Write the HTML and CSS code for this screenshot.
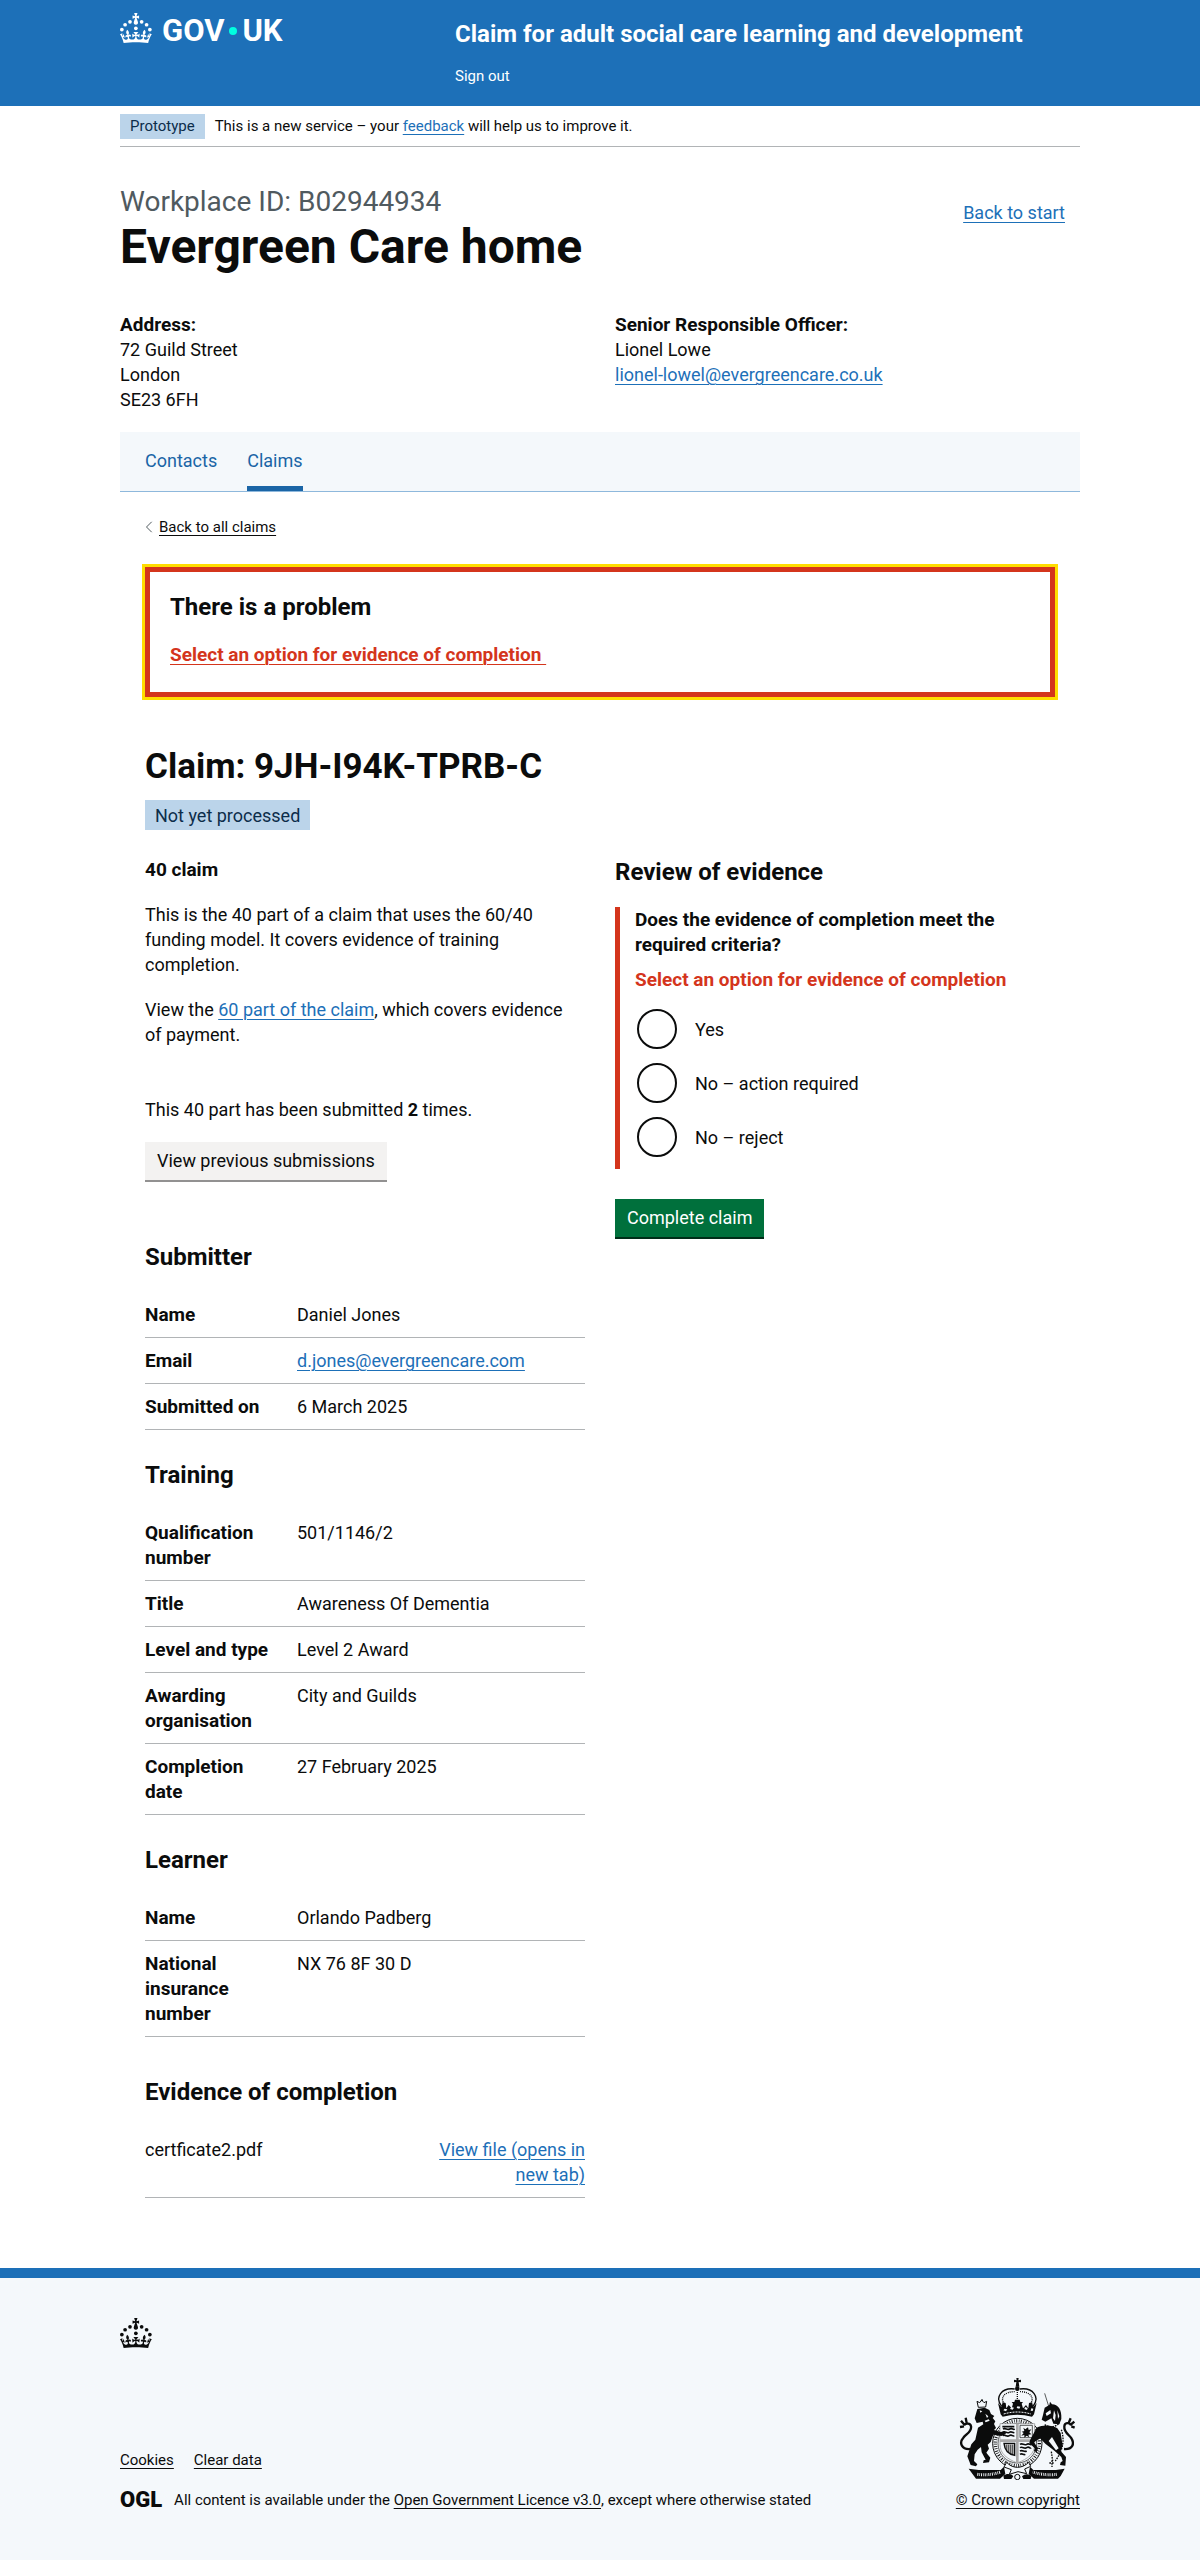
FILE: index.html
```html
<!DOCTYPE html>
<html lang="en">
<head>
  <meta charset="utf-8">
  <meta name="viewport" content="width=device-width, initial-scale=1">
  <title>Claim 9JH-I94K-TPRB-C – Claim for adult social care learning and development</title>
  <link rel="stylesheet" href="styles.css">
</head>
<body>
  <svg class="sprite" aria-hidden="true">
    <symbol id="crown" viewBox="0 0 64 60">
      <circle cx="20" cy="17.6" r="3.7"/><circle cx="10.2" cy="23.5" r="3.7"/><circle cx="3.7" cy="33.2" r="3.7"/>
      <circle cx="31.7" cy="30.6" r="3.7"/><circle cx="43.3" cy="17.6" r="3.7"/><circle cx="53.2" cy="23.5" r="3.7"/><circle cx="59.7" cy="33.2" r="3.7"/>
      <path d="M33.1,9.8c.2-.1.3-.3.5-.5l4.6,2.4v-6.8l-4.6,1.5c-.1-.2-.3-.3-.5-.5l1.9-5.9h-6.7l1.9,5.9c-.2.1-.3.3-.5.5l-4.6-1.5v6.8l4.6-2.4c.1.2.3.3.5.5l-2.6,8c-.9,2.8,1.2,5.7,4.1,5.7h0c3,0,5.1-2.9,4.1-5.7l-2.6-8ZM37,37.9s-3.4,3.8-4.1,6.1c2.2,0,4.2-.5,6.4-2.8l-.7,8.5c-2-2.8-4.4-4.1-5.7-3.8.1,3.1.5,6.7,5.8,7.2,3.7.3,6.7-1.5,7-3.8.4-2.6-2-4.3-3.7-1.6-1.4-4.5,2.4-6.1,4.9-3.2-1.9-4.5-1.8-7.7,2.4-10.9,3,4,2.6,7.3-1.2,11.1,2.4-1.3,6.2,0,4,4.6-1.2-2.8-3.7-2.2-4.2.2-.3,1.7.7,3.7,3,4.2,1.9.3,4.7-.9,7-5.9-1.3,0-2.4.7-3.9,1.7l2.4-8c.6,2.3,1.4,3.7,2.2,4.5.6-1.6.5-2.8,0-5.3l5,1.8c-2.6,3.6-5.2,8.7-7.3,17.5-7.4-1.1-15.7-1.7-24.5-1.7h0c-8.8,0-17.1.6-24.5,1.7-2.1-8.9-4.7-13.9-7.3-17.5l5-1.8c-.5,2.5-.6,3.7,0,5.3.8-.8,1.6-2.3,2.2-4.5l2.4,8c-1.5-1-2.6-1.7-3.9-1.7,2.3,5,5.2,6.2,7,5.9,2.3-.4,3.3-2.4,3-4.2-.5-2.4-3-3.1-4.2-.2-2.2-4.6,1.6-6,4-4.6-3.7-3.7-4.2-7.1-1.2-11.1,4.2,3.2,4.3,6.4,2.4,10.9,2.5-2.8,6.3-1.3,4.9,3.2-1.8-2.7-4.1-1-3.7,1.6.3,2.3,3.3,4.1,7,3.8,5.4-.5,5.7-4.2,5.8-7.2-1.3-.2-3.7,1-5.7,3.8l-.7-8.5c2.2,2.3,4.2,2.7,6.4,2.8-.7-2.3-4.1-6.1-4.1-6.1h10.6,0Z"/>
    </symbol>
  </svg>

  <header class="header">
    <div class="container header-grid">
      <a class="logo" href="#" aria-label="GOV.UK">
        <svg class="crown" aria-hidden="true"><use href="#crown"/></svg>
        <span class="logo-text"><span>GOV</span><span class="logo-dot"></span><span>UK</span></span>
      </a>
      <div class="service">
        <a class="service-name" href="#">Claim for adult social care learning and development</a>
        <a class="sign-out" href="#">Sign out</a>
      </div>
    </div>
  </header>

  <div class="container">
    <div class="phase-banner">
      <strong class="tag tag-small">Prototype</strong>
      <span>This is a new service – your <a class="link" href="#">feedback</a> will help us to improve it.</span>
    </div>

    <main>
      <div class="workplace-head">
        <div>
          <span class="caption">Workplace ID: B02944934</span>
          <h1 class="heading-xl">Evergreen Care home</h1>
        </div>
        <a class="link back-start" href="#">Back to start</a>
      </div>

      <div class="two-col">
        <address class="details"><strong>Address:</strong><br>72 Guild Street<br>London<br>SE23 6FH</address>
        <div class="details"><strong>Senior Responsible Officer:</strong><br>Lionel Lowe<br><a class="link" href="#">lionel-lowel@evergreencare.co.uk</a></div>
      </div>

      <nav class="tabs" aria-label="Workplace">
        <a class="tab" href="#">Contacts</a>
        <a class="tab tab-current" href="#" aria-current="page">Claims</a>
      </nav>

      <div class="panel">
        <a class="back-link" href="#">
          <svg class="chevron" viewBox="0 0 7 12" aria-hidden="true"><path d="M6.200 .8 1 6l5.200 5.200"/></svg>
          <span>Back to all claims</span>
        </a>

        <section class="error-summary" role="alert">
          <h2 class="heading-m">There is a problem</h2>
          <a class="error-link" href="#evidence-yes">Select an option for evidence of completion&nbsp;</a>
        </section>

        <h2 class="heading-l">Claim: 9JH-I94K-TPRB-C</h2>
        <strong class="tag">Not yet processed</strong>

        <div class="two-col claim">
          <div>
            <h3 class="heading-s">40 claim</h3>
            <p>This is the 40 part of a claim that uses the 60/40 funding model. It covers evidence of training completion.</p>
            <p>View the <a class="link" href="#">60 part of the claim</a>, which covers evidence of payment.</p>
            <p class="submitted">This 40 part has been submitted <strong>2</strong> times.</p>
            <button class="button button-secondary" type="button">View previous submissions</button>

            <section class="summary summary-first">
              <h3 class="heading-m">Submitter</h3>
              <dl>
                <div class="row"><dt>Name</dt><dd>Daniel Jones</dd></div>
                <div class="row"><dt>Email</dt><dd><a class="link" href="#">d.jones@evergreencare.com</a></dd></div>
                <div class="row"><dt>Submitted on</dt><dd>6 March 2025</dd></div>
              </dl>
            </section>

            <section class="summary">
              <h3 class="heading-m">Training</h3>
              <dl>
                <div class="row"><dt>Qualification number</dt><dd>501/1146/2</dd></div>
                <div class="row"><dt>Title</dt><dd>Awareness Of Dementia</dd></div>
                <div class="row"><dt>Level and type</dt><dd>Level 2 Award</dd></div>
                <div class="row"><dt>Awarding organisation</dt><dd>City and Guilds</dd></div>
                <div class="row"><dt>Completion date</dt><dd>27 February 2025</dd></div>
              </dl>
            </section>

            <section class="summary">
              <h3 class="heading-m">Learner</h3>
              <dl>
                <div class="row"><dt>Name</dt><dd>Orlando Padberg</dd></div>
                <div class="row"><dt>National insurance number</dt><dd>NX 76 8F 30 D</dd></div>
              </dl>
            </section>

            <section class="summary summary-files">
              <h3 class="heading-m">Evidence of completion</h3>
              <ul class="files">
                <li class="row file"><span>certficate2.pdf</span><a class="link" href="#">View file (opens in new tab)</a></li>
              </ul>
            </section>
          </div>

          <form class="review">
            <h3 class="heading-m">Review of evidence</h3>
            <fieldset class="question" aria-describedby="evidence-error">
              <legend>Does the evidence of completion meet the required criteria?</legend>
              <p class="error-message" id="evidence-error">Select an option for evidence of completion</p>
              <div class="radios">
                <div class="radio"><input type="radio" name="evidence" id="evidence-yes"><label for="evidence-yes">Yes</label></div>
                <div class="radio"><input type="radio" name="evidence" id="evidence-action"><label for="evidence-action">No – action required</label></div>
                <div class="radio"><input type="radio" name="evidence" id="evidence-reject"><label for="evidence-reject">No – reject</label></div>
              </div>
            </fieldset>
            <button class="button" type="button">Complete claim</button>
          </form>
        </div>
      </div>
    </main>
  </div>

  <footer class="footer">
    <div class="container">
      <svg class="crown" aria-hidden="true"><use href="#crown"/></svg>
      <div class="footer-meta">
        <div>
          <nav class="footer-links" aria-label="Support">
            <a class="footer-link" href="#">Cookies</a>
            <a class="footer-link" href="#">Clear data</a>
          </nav>
          <div class="licence">
            <span class="ogl">OGL</span>
            <span>All content is available under the <a class="footer-link" href="#">Open Government Licence v3.0</a>, except where otherwise stated</span>
          </div>
        </div>
        <div class="copyright">
          <svg class="arms" viewBox="7 15 351 306" aria-hidden="true">
            <!-- crest: crown and orb -->
            <path d="M179 15h7l-1 7 8-2v8l-7-1 2 14h-11l2-14-7 1v-8l8 2z"/>
            <path class="line-dark" d="M135 100c-22-28 0-57 39-52M229 100c22-28 0-57-39-52"/>
            <path class="line-dots" d="M146 98c-20-24-2-42 28-42M218 98c20-24 2-42-28-42"/>
            <path class="line-dots" d="M182 45v40"/>
            <circle cx="182" cy="47" r="7"/>
            <path d="M124 90l10 12 4-14 9 2 2 16 7-10 9 10 4-14-4-5h8l2-7h14l2 7h8l-4 5 4 14 9-10 7 10 2-16 9-2 4 14 10-12-8 34-6 7c-30-8-58-8-88 0l-6-7z"/>
            <path class="light" d="M140 112l8 3 4-6-8-2zM160 108l8 2 4-6-8-2zM180 105l8 2 3-6-9-1zM203 108l8 3 2-6-8-3zM222 113l6 1 2-7-6-1z"/>
            <path class="line-light" d="M141 123c28-8 54-8 82 0"/>
            <!-- garter and shield -->
            <ellipse class="ring" cx="182" cy="211" rx="74" ry="75"/>
            <ellipse class="motto" cx="182" cy="211" rx="66" ry="67"/>
            <ellipse class="line-thin" cx="182" cy="211" rx="58" ry="59"/>
            <path class="shield" d="M130 152h104v62c0 28-20 43-52 56-32-13-52-28-52-56z"/>
            <path class="cross" d="M182 152v118M130 203h104"/>
            <path class="squiggle" d="M137 161h36M139 168c8-5 12 5 20 0s10 4 15 0M138 178c8-5 12 5 20 0s10 4 15 0M138 188c8-5 12 5 20 0s10 4 15 0"/>
            <path class="line-thin" d="M190 157h37v37h-37z"/>
            <path d="M200 164l6 5 8-6 2 8 8-2-6 9 6 6-9 1 3 8-8-5-7 6v-8l-9 2 7-8-6-4 8-2z"/>
            <path class="squiggle" d="M190 214c8-5 12 5 20 0s10 4 15 0M190 224c8-5 12 5 20 0s10 4 13 0M190 234c8-5 12 5 20 0M190 244c8-5 10 4 16 0"/>
            <path class="harp" d="M142 211h32v36c-16-3-30-14-32-36z"/>
            <path class="line-thin" d="M150 215v18M156 215v23M162 215v27M168 215v29"/>
            <!-- lion -->
            <path class="outline" d="M61 85l8 4 6-8 7 8 8-4-3 17-22 1z"/>
            <circle cx="76" cy="82" r="3"/>
            <path d="M62 108l22-4 14 7 5 12 10 6-5 6 8 10-4 8 6 12-6 6 20 6 12-2 4 8-14 6-24-4-8 22-9 8 4 12-8 12 12 15-4 14-18 2 2-8 6-2-12-22-2-16-10 8-9 14-2 20 10 10-4 6-16-4-10-26 12-36 12-14 8-36 16-10-2-8-18 4-6-14z"/>
            <path class="light" d="M69 112l8 3-6 4zM86 122l9 8-4 5zM84 143l12-4 3 4-12 5z"/>
            <path class="tail" d="M40 228c-24 2-34-18-20-34 10-12 26-18 23-34-2-10-15-10-21-3M24 156l-11-13M30 150l-3-16M22 160l-12 2"/>
            <!-- unicorn -->
            <path class="line-thin" d="M277 103l-13-42"/>
            <path d="M264 104l14-8 2-10 6 8c18 0 30 16 28 44l-6 16-18-2-6-16-18 10-11-6 4-14z"/>
            <path class="light" d="M267 121l14-10 2 10-13 8zM292 112l5 14-2 18-6-8zM302 111l6 19-4 8z"/>
            <path class="chain" d="M264 155c14 10 34 8 45-6M314 170c10 30 6 60-18 94"/>
            <path d="M240 164c16-8 44-10 62 2l10 14 6 38-6 16 16 18-2 26-16-2 2-8 6-4-4-12-20-18-28-22-16-16-18 12 12 18-4 12-8-4 2-8-16-16 2-8z"/>
            <path class="light" d="M286 192l20 34-8 6-22-28z"/>
            <path class="chain" d="M284 236l4 28M278 270h16M286 262v20"/>
            <path class="tail" d="M322 228c24 2 34-14 21-34-8-10-22-18-20-34 1-12 14-12 20-4M341 156l12-10M336 150l6-14M344 160l10 4"/>
            <!-- motto ribbon -->
            <path d="M36 287l30 4h66l10-10 4 22-16 14H58l-6-8z"/>
            <path d="M324 287l-26 4h-68l-10-10-4 22 16 14h72l8-8z"/>
            <path class="ribbon-text" d="M62 304c24 3 46 1 70-7M300 304c-22 3-48 1-72-7"/>
            <path class="outline" d="M150 268c18 20 46 20 66 0l6 12-18 8 6 14-26-6-26 8 6-14-22-8z"/>
            <path d="M140 308c10-8 24-6 30 2l-6 8h-22zM196 310c8-8 22-8 28 0l-2 8h-22z"/>
            <circle class="outline" cx="182" cy="312" r="8"/>
          </svg>
          <a class="footer-link" href="#">© Crown copyright</a>
        </div>
      </div>
    </div>
  </footer>
</body>
</html>
```
FILE: styles.css
```css
:root {
  --ink: #0b0c0c;
  --blue: #1d70b8;
  --tint: #f4f8fb;
  --rule: #b1b4b6;
  --red: #d4351c;
}

* { box-sizing: border-box; }

body {
  margin: 0;
  background: #fff;
  color: var(--ink);
  font: 18px/25px Roboto, "Liberation Sans", sans-serif;
}

h1, h2, h3, p, dl, dd, ul, fieldset { margin: 0; padding: 0; }
ul { list-style: none; }
strong { font-weight: 700; }
a { color: inherit; text-decoration: none; }

.sprite { display: none; }

.container {
  max-width: 960px;
  margin: 0 auto;
}

.link, .error-link, .back-link span, .footer-link {
  text-decoration: underline;
  text-decoration-thickness: 1px;
  text-underline-offset: 3px;
}
.link { color: var(--blue); }

.crown {
  display: block;
  width: 32px;
  height: 30px;
  fill: currentColor;
}

/* Header */
.header {
  background: var(--blue);
  color: #fff;
  padding: 13px 0 20px;
}
.header-grid {
  display: grid;
  grid-template-columns: 320px 1fr;
  gap: 15px;
}
.logo {
  display: flex;
  align-items: flex-start;
  gap: 10px;
}
.logo-text {
  display: flex;
  align-items: center;
  gap: 5px;
  font-size: 31px;
  font-weight: 700;
  line-height: 36px;
}
.logo-dot {
  width: 8px;
  height: 8px;
  border-radius: 50%;
  background: #00ffe0;
}
.service {
  display: flex;
  flex-direction: column;
  align-items: flex-start;
  gap: 17px;
  padding-top: 6px;
}
.service-name {
  font-size: 24px;
  font-weight: 700;
  line-height: 30px;
}
.sign-out {
  font-size: 15px;
  line-height: 20px;
}

/* Phase banner */
.phase-banner {
  display: flex;
  align-items: center;
  gap: 10px;
  padding: 8px 0 7px;
  border-bottom: 1px solid var(--rule);
  font-size: 15px;
}
.tag {
  display: inline-block;
  padding: 3px 10px 2px;
  background: #bbd4ea;
  color: #0c2d4a;
  font-weight: 400;
  vertical-align: top;
}
.tag-small { padding: 0 10px; }

/* Workplace details */
.workplace-head {
  display: flex;
  justify-content: space-between;
  padding: 40px 0;
}
.caption {
  display: block;
  margin-bottom: 5px;
  color: #505a5f;
  font-size: 28px;
  line-height: 30px;
}
.heading-xl {
  font-size: 48px;
  line-height: 50px;
}
.heading-l {
  margin-bottom: 13px;
  font-size: 35px;
  line-height: 40px;
}
.heading-m {
  margin-bottom: 20px;
  font-size: 24px;
  line-height: 30px;
}
.heading-s {
  margin-bottom: 20px;
  font-size: 19px;
  line-height: 25px;
}
.back-start {
  align-self: flex-start;
  margin: 13px 15px 0 0;
}
.two-col {
  display: grid;
  grid-template-columns: 1fr 1fr;
  gap: 30px;
}
.details { font-style: normal; }
.details strong { font-size: 19px; }

/* Tabs */
.tabs {
  display: flex;
  gap: 30px;
  margin-top: 20px;
  padding: 0 25px;
  border-bottom: 1px solid #8eb8dc;
  background: var(--tint);
  color: #1a65a6;
}
.tab { padding: 16px 0 18px; }
.tab-current {
  padding-bottom: 13px;
  border-bottom: 5px solid #1a65a6;
}

.panel { padding: 25px 25px 70px; }

.back-link {
  display: flex;
  align-items: center;
  gap: 6px;
  width: fit-content;
  font-size: 15px;
  line-height: 20px;
}
.chevron {
  width: 8px;
  height: 12px;
  fill: none;
  stroke: #505a5f;
}

.error-summary {
  margin: 30px 0 50px;
  padding: 20px 20px 25px;
  border: 5px solid var(--red);
  outline: 3px solid #ffdd00;
}
.error-link {
  display: inline-block;
  color: var(--red);
  font-size: 19px;
  font-weight: 700;
  vertical-align: top;
}

/* Claim */
.claim { padding-top: 27px; }
.claim p {
  margin-bottom: 20px;
  padding-right: 10px;
}
.claim p.submitted { margin-top: 50px; }

.button {
  display: block;
  padding: 6px 12px 7px;
  border: 0;
  border-radius: 0;
  background: #00703c;
  box-shadow: 0 2px 0 #002d18;
  color: #fff;
  font: inherit;
  cursor: pointer;
}
.button-secondary {
  background: #f3f2f1;
  box-shadow: 0 2px 0 #929191;
  color: var(--ink);
}

.summary { margin-top: 30px; }
.summary-first { margin-top: 62px; }
.summary-files { margin-top: 40px; }
.row {
  display: grid;
  grid-template-columns: 132px 1fr;
  gap: 20px;
  padding: 10px 0;
  border-bottom: 1px solid var(--rule);
}
.row dt {
  font-size: 19px;
  font-weight: 700;
}
.file { grid-template-columns: 1fr 160px; }
.file a { text-align: right; }

/* Review form */
.question {
  display: flow-root;
  min-width: 0;
  margin-bottom: 30px;
  padding: 0 0 10px 15px;
  border: 0;
  border-left: 5px solid var(--red);
}
/* Floated so that the side border runs the full height of the group */
.question legend {
  float: left;
  width: 100%;
  margin-bottom: 10px;
  padding: 0;
  font-size: 19px;
  font-weight: 700;
}
.claim p.error-message {
  clear: both;
  margin-bottom: 15px;
  color: var(--red);
  font-size: 19px;
  font-weight: 700;
}
.radios {
  display: grid;
  gap: 10px;
}
.radio {
  display: flex;
  align-items: center;
  gap: 18px;
  min-height: 44px;
}
.radio input {
  appearance: none;
  width: 40px;
  height: 40px;
  margin: 0 0 0 2px;
  border: 2px solid var(--ink);
  border-radius: 50%;
  background: #fff;
}
.radio input:checked { box-shadow: inset 0 0 0 8px #fff; background: var(--ink); }

/* Footer */
.footer {
  padding: 40px 0 50px;
  border-top: 10px solid var(--blue);
  background: var(--tint);
  font-size: 15px;
  line-height: 20px;
}
.footer-meta {
  display: flex;
  align-items: flex-end;
  justify-content: space-between;
  margin-top: 30px;
}
.footer-links {
  display: flex;
  gap: 20px;
  margin-bottom: 20px;
}
.licence {
  display: flex;
  gap: 12px;
}
.ogl {
  font-size: 22px;
  font-weight: 900;
}
.copyright {
  display: flex;
  flex-direction: column;
  align-items: center;
  gap: 10px;
}

.arms {
  width: 117px;
  height: 102px;
  fill: var(--ink);
}
.arms .light { fill: var(--tint); }
.arms .outline { fill: var(--tint); stroke: var(--ink); stroke-width: 3; }
.arms .line-dark { fill: none; stroke: var(--ink); stroke-width: 4; }
.arms .line-thin { fill: none; stroke: var(--ink); stroke-width: 2; }
.arms .line-light { fill: none; stroke: var(--tint); stroke-width: 3; stroke-dasharray: 6 3; }
.arms .line-dots { fill: none; stroke: var(--ink); stroke-width: 4; stroke-dasharray: 3 3; }
.arms .ring { fill: var(--tint); stroke: var(--ink); stroke-width: 3; }
.arms .motto { fill: none; stroke: var(--ink); stroke-width: 10; stroke-dasharray: 3 5 2 4; }
.arms .shield { fill: var(--tint); stroke: #888; stroke-width: 2; }
.arms .cross { fill: none; stroke: #aaa; stroke-width: 8; }
.arms .squiggle { fill: none; stroke: var(--ink); stroke-width: 5; }
.arms .harp { fill: #bbb; stroke: var(--ink); stroke-width: 4; }
.arms .chain { fill: none; stroke: var(--ink); stroke-width: 4; stroke-dasharray: 5 3; }
.arms .tail { fill: none; stroke: var(--ink); stroke-width: 7; }
.arms .ribbon-text { fill: none; stroke: var(--tint); stroke-width: 9; stroke-dasharray: 3 3 2 3; }

@media (max-width: 1020px) {
  .container { margin: 0 30px; }
}
@media (max-width: 760px) {
  .container { margin: 0 15px; }
  .header-grid, .two-col { grid-template-columns: 1fr; }
  .footer-meta { flex-wrap: wrap; gap: 30px; }
}
```
